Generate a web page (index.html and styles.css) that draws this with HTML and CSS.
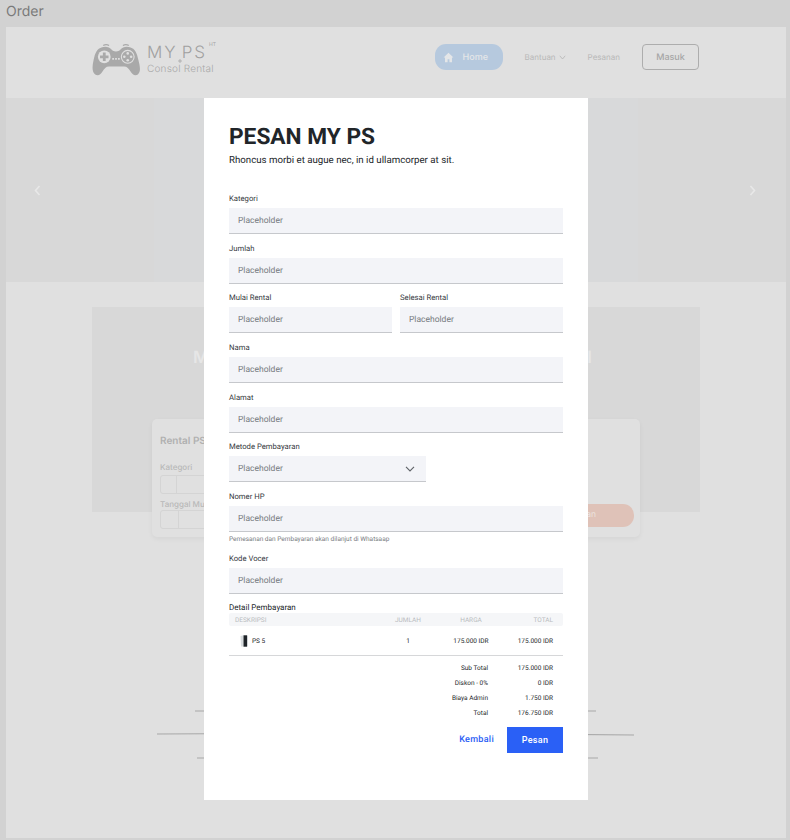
FILE: index.html
```html
<!DOCTYPE html>
<html lang="en">
<head>
    <meta charset="UTF-8">
    <meta name="viewport" content="width=device-width, initial-scale=1.0">
    <title>Order</title>
    <link rel="stylesheet" href="styles.css">
</head>
<body>
    <h1 class="pageTitle">Order</h1>

    <!-- dimmed page behind the dialog -->
    <div class="frame">
        <nav class="nav">
            <div class="logo">
                <svg class="logoIcon" width="48" height="32" viewBox="1.500 1 45 30">
                    <path d="M12 2.500c1.500-1 4-1 5.500 0M30.500 2.500c1.500-1 4-1 5.500 0" stroke="#a9a9a9" stroke-width="1.100" fill="none"/>
                    <path d="M11 4c3-1 7-.5 9 2.500 1 1.200 2 1.500 4 1.500s3-.3 4-1.500c2-3 6-3.500 9-2.500 5 1.500 6.500 5 8 12 1.500 6 2.500 11-.5 13.500-3 2-5.500-.5-7-3-1.500-2.500-3-4.500-6-4.500H17.500c-3 0-4.500 2-6 4.500-1.500 2.500-4 5-7 3C1.500 27.500 1.500 22 3 16 4.500 9 6 5.500 11 4z" fill="#a9a9a9"/>
                    <circle cx="13" cy="13" r="6" fill="#e0e0e0"/>
                    <path d="M11.700 9h2.600v2.700H17v2.600h-2.700V17h-2.600v-2.700H9v-2.600h2.700z" fill="#a9a9a9"/>
                    <circle cx="35" cy="13" r="6" fill="none" stroke="#e0e0e0" stroke-width="1"/>
                    <circle cx="35" cy="9.800" r="1.200" fill="#e0e0e0"/>
                    <circle cx="35" cy="16.200" r="1.200" fill="#e0e0e0"/>
                    <circle cx="31.800" cy="13" r="1.200" fill="#e0e0e0"/>
                    <circle cx="38.200" cy="13" r="1.200" fill="#e0e0e0"/>
                    <path d="M20.500 15h7" stroke="#e0e0e0" stroke-width="1.600" stroke-dasharray="1.600 1.100"/>
                </svg>
                <div class="logoText">
                    <div class="logoName">MY<svg class="logoPlus" width="4" height="4" viewBox="0 0 4 4"><path d="M2 0v4M0 2h4" stroke="#a0a0a0" stroke-width=".7"/></svg>PS<sup class="logoSup">HT</sup></div>
                    <div class="logoSub">Consol Rental</div>
                </div>
            </div>
            <div class="navLinks">
                <a class="navHome">
                    <svg width="11" height="11" viewBox="0 0 12 12"><path d="M6 .8 .6 6h1.600v5.200h2.800V8h2v3.200h2.800V6h1.600z" fill="#e4e6e8"/></svg>
                    Home
                </a>
                <a class="navLink navBantuan">Bantuan
                    <svg width="7" height="5" viewBox="0 0 7 5"><path d="M.8 .8 3.500 4 6.200 .8" fill="none" stroke="#b5b5b5" stroke-width=".8"/></svg>
                </a>
                <a class="navLink navPesanan">Pesanan</a>
                <a class="navMasuk">Masuk</a>
            </div>
        </nav>

        <div class="hero">
            <div class="heroSide"></div>
            <div class="heroMid"></div>
            <div class="heroSide"></div>
            <svg class="heroArrow heroArrowLeft" width="7" height="11" viewBox="0 0 7 11"><path d="M5.500 1 1.500 5.500l4 4.500" fill="none" stroke="#e8e8e8" stroke-width="1.600"/></svg>
            <svg class="heroArrow heroArrowRight" width="7" height="11" viewBox="0 0 7 11"><path d="M1.500 1l4 4.500-4 4.500" fill="none" stroke="#e8e8e8" stroke-width="1.600"/></svg>
        </div>

        <section class="rental">
            <div class="rentalBanner">
                <div class="bannerHeading"><span>M</span><span>I</span></div>
            </div>
            <div class="rentalCard">
                <div class="rentalCardTitle">Rental PS</div>
                <div class="rentalRow">Kategori</div>
                <div class="rentalInput"><span class="rentalCell"></span></div>
                <div class="rentalRow rentalRowLast">Tanggal Mu</div>
                <div class="rentalInput"><span class="rentalCell rentalCellWide"></span></div>
                <a class="rentalBtn">an</a>
            </div>
        </section>

        <svg class="decorLines" width="480" height="64" viewBox="0 0 480 64">
            <path d="M39 2h170M271 2h169M1 25 209 24M271 24 478 26M41 49h168M271 49h171" stroke="#a8a8a8" stroke-width="1.200" fill="none"/>
        </svg>
    </div>

    <!-- dialog -->
    <div class="dialog">
        <h2 class="dialogTitle">PESAN MY PS</h2>
        <p class="dialogLead">Rhoncus morbi et augue nec, in id ullamcorper at sit.</p>

        <form class="orderForm">
            <div class="field">
                <label class="fieldLabel">Kategori</label>
                <div class="fieldInput">Placeholder</div>
            </div>
            <div class="field">
                <label class="fieldLabel">Jumlah</label>
                <div class="fieldInput">Placeholder</div>
            </div>
            <div class="fieldPair">
                <div class="field">
                    <label class="fieldLabel">Mulai Rental</label>
                    <div class="fieldInput">Placeholder</div>
                </div>
                <div class="field">
                    <label class="fieldLabel">Selesai Rental</label>
                    <div class="fieldInput">Placeholder</div>
                </div>
            </div>
            <div class="field">
                <label class="fieldLabel">Nama</label>
                <div class="fieldInput">Placeholder</div>
            </div>
            <div class="field">
                <label class="fieldLabel">Alamat</label>
                <div class="fieldInput">Placeholder</div>
            </div>
            <div class="field">
                <label class="fieldLabel">Metode Pembayaran</label>
                <div class="fieldInput fieldSelect">Placeholder
                    <svg width="10" height="6" viewBox="0 0 10 6"><path d="M1 .8 5 5 9 .8" fill="none" stroke="#5f6368" stroke-width="1.100"/></svg>
                </div>
            </div>
            <div class="field">
                <label class="fieldLabel">Nomer HP</label>
                <div class="fieldInput">Placeholder</div>
                <div class="fieldNote">Pemesanan dan Pembayaran akan dilanjut di Whatsaap</div>
            </div>
            <div class="field fieldVoucher">
                <label class="fieldLabel">Kode Vocer</label>
                <div class="fieldInput">Placeholder</div>
            </div>
        </form>

        <div class="detailTitle">Detail Pembayaran</div>
        <div class="detailHead">
            <span class="colDesc">DESKRIPSI</span>
            <span class="colQty">JUMLAH</span>
            <span class="colPrice">HARGA</span>
            <span class="colTotal">TOTAL</span>
        </div>
        <div class="detailRow">
            <span class="colDesc itemName">
                <svg width="8" height="12" viewBox="0 0 8 12">
                    <path d="M.5 1 3.500 .3V11.500H1z" fill="#d9dde0"/>
                    <rect x="3.500" y=".3" width="3.500" height="11.400" fill="#1f2429"/>
                    <path d="M7 .6h.8v11H7z" fill="#c4c8cc"/>
                </svg>
                PS 5
            </span>
            <span class="colQty">1</span>
            <span class="colPrice">175.000 IDR</span>
            <span class="colTotal">175.000 IDR</span>
        </div>

        <div class="summary">
            <div class="summaryRow"><span>Sub Total</span><span>175.000 IDR</span></div>
            <div class="summaryRow"><span>Diskon - 0%</span><span>0 IDR</span></div>
            <div class="summaryRow"><span>Biaya Admin</span><span>1.750 IDR</span></div>
            <div class="summaryRow"><span>Total</span><span>176.750 IDR</span></div>
        </div>

        <div class="actions">
            <a class="btnBack">Kembali</a>
            <button class="btnOrder" type="button">Pesan</button>
        </div>
    </div>
</body>
</html>
```

FILE: styles.css
```css
html, body {
    height: 840px;
}

body {
    margin: 0;
    padding: 0;
    background-color: #d2d2d2;
    font-family: Roboto, sans-serif;
    text-rendering: geometricPrecision;
    overflow: hidden;
    position: relative;
}

.pageTitle {
    margin: 0;
    padding: 3px 0 0 6px;
    height: 27px;
    box-sizing: border-box;
    font-family: Inter, sans-serif;
    font-size: 14px;
    line-height: 17px;
    font-weight: 400;
    color: #7a7a7a;
}

.frame {
    margin: 0 4px 0 6px;
    height: 811px;
    background-color: #e0e0e0;
    position: relative;
}

/* nav */
.nav {
    height: 71px;
    box-sizing: border-box;
    padding: 17px 87px 0 86px;
    display: flex;
    justify-content: space-between;
    align-items: flex-start;
}

.logo {
    display: flex;
    gap: 7px;
    align-items: flex-start;
}

.logoName {
    height: 19px;
    font-family: Inter, sans-serif;
    font-weight: 300;
    font-size: 17px;
    line-height: 18px;
    letter-spacing: 2px;
    color: #a0a0a0;
    position: relative;
    white-space: nowrap;
}

.logoPlus {
    vertical-align: -5px;
}

.logoSup {
    position: absolute;
    top: -2px;
    left: 62px;
    font-size: 5px;
    line-height: 6px;
    letter-spacing: 0;
    font-weight: 400;
}

.logoSub {
    font-family: Inter, sans-serif;
    font-weight: 300;
    font-size: 10px;
    line-height: 12px;
    letter-spacing: .2px;
    color: #a8a8a8;
}

.navLinks {
    display: flex;
    align-items: center;
}

.navHome {
    width: 68px;
    height: 26px;
    box-sizing: border-box;
    padding-left: 8px;
    display: flex;
    align-items: center;
    gap: 9px;
    border-radius: 11px;
    background-color: #b6c9de;
    color: #e4e6e8;
    font-family: Inter, sans-serif;
    font-size: 9px;
    font-weight: 500;
}

.navLink {
    font-family: Inter, sans-serif;
    font-size: 8px;
    color: #b8b8b8;
    display: flex;
    align-items: center;
    gap: 3px;
}

.navBantuan {
    margin-left: 22px;
}

.navPesanan {
    margin-left: 22px;
}

.navMasuk {
    margin-left: 22px;
    width: 57px;
    height: 26px;
    box-sizing: border-box;
    border: 1px solid #adadad;
    border-radius: 4px;
    display: flex;
    align-items: center;
    justify-content: center;
    font-family: Inter, sans-serif;
    font-size: 9px;
    font-weight: 500;
    color: #a6a6a6;
}

/* hero */
.hero {
    height: 184px;
    display: flex;
    position: relative;
    background-color: #d8d9da;
}

.heroSide {
    width: 148px;
    background-color: #d8d8d8;
}

.heroMid {
    flex: 1;
}

.heroArrow {
    position: absolute;
    top: 87px;
}

.heroArrowLeft {
    left: 28px;
}

.heroArrowRight {
    right: 30px;
}

/* section behind the dialog */
.rental {
    position: relative;
    padding: 25px 86px 0;
}

.rentalBanner {
    height: 205px;
    background-color: #d8d8d8;
    box-sizing: border-box;
    padding-top: 41px;
}

.bannerHeading {
    display: flex;
    justify-content: space-between;
    padding: 0 108px 0 101px;
    font-family: Inter, sans-serif;
    font-size: 17px;
    font-weight: 600;
    color: #e6e6e6;
}

.rentalCard {
    position: absolute;
    left: 146px;
    top: 137px;
    width: 488px;
    height: 118px;
    box-sizing: border-box;
    padding: 16px 8px;
    background-color: #e0e0e0;
    border-radius: 5px;
    box-shadow: 0 2px 5px rgba(0, 0, 0, .05);
    font-family: Inter, sans-serif;
    color: #b8b8b8;
}

.rentalCardTitle {
    font-size: 10px;
    font-weight: 600;
    line-height: 13px;
    color: #b0b0b0;
}

.rentalRow {
    margin-top: 14px;
    font-size: 8px;
    font-weight: 500;
    line-height: 10px;
}

.rentalRowLast {
    margin-top: 7px;
    line-height: 6px;
}

.rentalInput {
    height: 17px;
    margin-top: 3px;
    border: 1px solid #d4d4d4;
    border-radius: 3px;
    width: 60px;
}

.rentalCell {
    display: block;
    width: 15px;
    height: 17px;
    border-right: 1px solid #d4d4d4;
}

.rentalCellWide {
    width: 17px;
}

.rentalBtn {
    position: absolute;
    right: 6px;
    bottom: 10px;
    width: 100px;
    height: 23px;
    box-sizing: border-box;
    padding-right: 38px;
    border-radius: 11px;
    background-color: #dfc2b8;
    color: #ece2de;
    font-size: 8.500px;
    line-height: 23px;
    text-align: right;
}

.decorLines {
    position: absolute;
    left: 150px;
    top: 682px;
}

/* dialog */
.dialog {
    position: absolute;
    left: 204px;
    top: 98px;
    width: 384px;
    height: 702px;
    box-sizing: border-box;
    padding: 24px 25px 0;
    background-color: #fff;
    color: #212529;
}

.dialogTitle {
    margin: 0;
    font-size: 22.700px;
    line-height: 30px;
    font-weight: 700;
}

.dialogLead {
    margin: 3px 0 0;
    font-size: 9.700px;
    line-height: 12px;
}

.orderForm {
    margin-top: 27px;
}

.field {
    flex: 1;
    margin-bottom: 9.700px;
}

.fieldPair {
    display: flex;
    gap: 8px;
}

.fieldLabel {
    display: block;
    height: 14px;
    font-size: 7.700px;
    line-height: 10px;
    color: #35383d;
}

.fieldInput {
    height: 26px;
    box-sizing: border-box;
    padding: 1px 0 0 9px;
    display: flex;
    align-items: center;
    background-color: #f3f4f8;
    border-bottom: 1px solid #c6c8cc;
    font-size: 8.500px;
    color: #777b80;
}

.fieldSelect {
    width: 197px;
    justify-content: space-between;
    padding-right: 11px;
}

.fieldNote {
    margin-top: 3px;
    font-size: 6.500px;
    line-height: 8px;
    color: #777b80;
}

.fieldVoucher {
    margin-top: 11px;
    margin-bottom: 0;
}

.detailTitle {
    margin-top: 9px;
    font-size: 8px;
    line-height: 10px;
}

.detailHead {
    height: 13px;
    display: flex;
    align-items: center;
    padding: 0 10px 0 6px;
    background-color: #f5f6f8;
    border-radius: 2px;
    font-size: 6.500px;
    color: #b9bcc0;
}

.detailRow {
    height: 30px;
    box-sizing: border-box;
    display: flex;
    align-items: center;
    padding: 0 10px 0 6px;
    border-bottom: 1px solid #d6d7d9;
    font-size: 6.500px;
}

.colDesc {
    flex: 1;
}

.colQty {
    width: 30px;
    text-align: center;
}

.colPrice {
    width: 36px;
    margin-left: 30px;
    text-align: center;
    white-space: nowrap;
}

.colTotal {
    width: 64px;
    text-align: right;
}

.itemName {
    display: flex;
    align-items: center;
    gap: 4px;
    padding-left: 5px;
}

.summary {
    margin-top: 5px;
    padding-right: 10px;
    font-size: 6.500px;
}

.summaryRow {
    height: 14.700px;
    display: flex;
    justify-content: flex-end;
    align-items: center;
}

.summaryRow span:first-child {
    width: 60px;
    text-align: right;
}

.summaryRow span:last-child {
    width: 65px;
    text-align: right;
}

.actions {
    margin-top: 7px;
    display: flex;
    justify-content: flex-end;
    align-items: center;
    gap: 13px;
}

.btnBack {
    color: #2a5ef5;
    font-size: 9px;
    font-weight: 500;
    letter-spacing: .3px;
}

.btnOrder {
    width: 56px;
    height: 26px;
    border: none;
    padding: 0;
    background-color: #2a60f6;
    color: #fff;
    font-family: Roboto, sans-serif;
    font-size: 9px;
    font-weight: 500;
    letter-spacing: .3px;
}
```
